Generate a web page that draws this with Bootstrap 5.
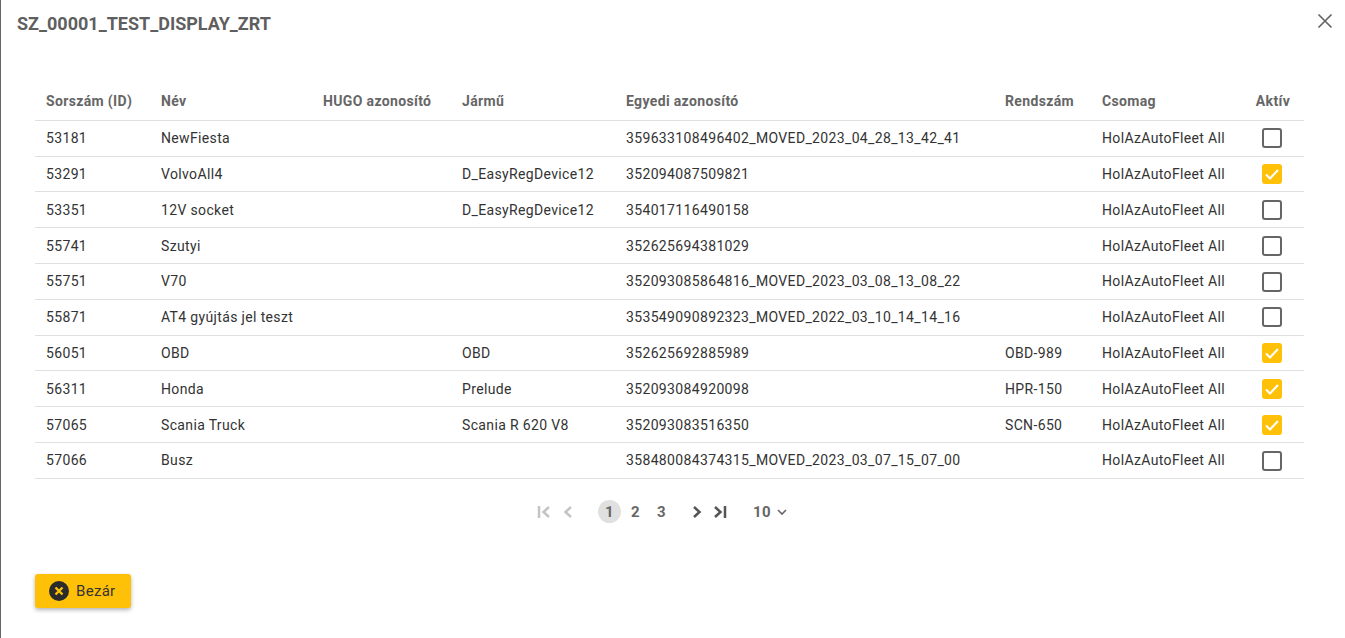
<!DOCTYPE html>
<html lang="hu">
<head>
<meta charset="utf-8">
<title>SZ_00001_TEST_DISPLAY_ZRT</title>
<link href="https://cdn.jsdelivr.net/npm/bootstrap@5.3.0/dist/css/bootstrap.min.css" rel="stylesheet">
<style>
html,body{height:100%;margin:0;overflow:hidden}
body{font-family:Roboto,"Liberation Sans",sans-serif;font-size:14px;color:#333;background:#fff}
.dlg{height:638px;border-left:1px solid #666;padding:0 41px 0 34px;position:relative}
.dlg-title{font-size:18px;font-weight:700;color:#5f5f5f;margin:0 0 0 -18px;padding-top:13px;line-height:21px;height:73px}
.dlg-close{position:absolute;top:13px;right:12px;width:16px;height:16px;background:none;border:0;padding:0;line-height:0}
.grid-tbl{table-layout:fixed;width:1269px;margin:0;border-collapse:collapse}
.grid-tbl th,.grid-tbl td{padding:1px 0 0 11px;border:0;border-bottom:1px solid #e0e0e0;vertical-align:middle;white-space:nowrap;font-size:14px;letter-spacing:.35px;box-shadow:none}
.grid-tbl th{height:47.3px;padding-top:10px;color:#666;font-weight:700}
.grid-tbl td{height:35.8px;color:#333}
.grid-tbl td.cell-c{padding:0 4px 1px 0;text-align:center}
.grid-tbl th.cell-c{padding:10px 2px 0 0;text-align:center}
.chk{display:inline-block;width:20px;height:20px;border:2px solid #666;border-radius:3px;vertical-align:middle;position:relative}
.chk.on{background:#ffc107;border-color:#ffc107}
.chk svg{display:block;position:absolute;left:-2px;top:-2px}
.pager{height:66px;color:#666;font-weight:700;font-size:15px;letter-spacing:.3px;margin-left:501px}
.pg-ico{display:inline-flex;width:16px;justify-content:center;line-height:0}
.pg-num{width:23px;height:23px;border-radius:50%;display:flex;align-items:center;justify-content:center}
.pg-num.cur{background:#e0e0e0}
.btn-close-dlg{background:#ffc107;border:0;border-radius:3px;height:34px;width:96px;display:flex;align-items:center;gap:7px;padding:0 0 0 14px;color:#333;font-size:15px;box-shadow:0 2px 4px rgba(0,0,0,.3);margin-top:29.700px;letter-spacing:.3px}
</style>
</head>
<body>
<div class="dlg">
  <h1 class="dlg-title">SZ_00001_TEST_DISPLAY_ZRT</h1>
  <button class="dlg-close" aria-label="Bezár">
    <svg width="16" height="16" viewBox="0 0 16 16" fill="none" stroke="#666" stroke-width="1.7"><path d="M1.5 1.5L14.500 14.500M14.500 1.500L1.500 14.500"/></svg>
  </button>
  <table class="table grid-tbl">
    <colgroup><col style="width:115px"><col style="width:162px"><col style="width:139px"><col style="width:164px"><col style="width:379px"><col style="width:97px"><col style="width:153px"><col style="width:60px"></colgroup>
    <thead><tr><th>Sorszám (ID)</th><th>Név</th><th>HUGO azonosító</th><th>Jármű</th><th>Egyedi azonosító</th><th>Rendszám</th><th>Csomag</th><th class="cell-c">Aktív</th></tr></thead>
    <tbody>
      <tr><td>53181</td><td>NewFiesta</td><td></td><td></td><td>359633108496402_MOVED_2023_04_28_13_42_41</td><td></td><td>HolAzAutoFleet All</td><td class="cell-c"><span class="chk"></span></td></tr>
      <tr><td>53291</td><td>VolvoAll4</td><td></td><td>D_EasyRegDevice12</td><td>352094087509821</td><td></td><td>HolAzAutoFleet All</td><td class="cell-c"><span class="chk on"><svg width="20" height="20" viewBox="0 0 20 20" fill="none" stroke="#fff" stroke-width="2"><path d="M4 10.500L8 14.500L16 6"/></svg></span></td></tr>
      <tr><td>53351</td><td>12V socket</td><td></td><td>D_EasyRegDevice12</td><td>354017116490158</td><td></td><td>HolAzAutoFleet All</td><td class="cell-c"><span class="chk"></span></td></tr>
      <tr><td>55741</td><td>Szutyi</td><td></td><td></td><td>352625694381029</td><td></td><td>HolAzAutoFleet All</td><td class="cell-c"><span class="chk"></span></td></tr>
      <tr><td>55751</td><td>V70</td><td></td><td></td><td>352093085864816_MOVED_2023_03_08_13_08_22</td><td></td><td>HolAzAutoFleet All</td><td class="cell-c"><span class="chk"></span></td></tr>
      <tr><td>55871</td><td>AT4 gyújtás jel teszt</td><td></td><td></td><td>353549090892323_MOVED_2022_03_10_14_14_16</td><td></td><td>HolAzAutoFleet All</td><td class="cell-c"><span class="chk"></span></td></tr>
      <tr><td>56051</td><td>OBD</td><td></td><td>OBD</td><td>352625692885989</td><td>OBD-989</td><td>HolAzAutoFleet All</td><td class="cell-c"><span class="chk on"><svg width="20" height="20" viewBox="0 0 20 20" fill="none" stroke="#fff" stroke-width="2"><path d="M4 10.500L8 14.500L16 6"/></svg></span></td></tr>
      <tr><td>56311</td><td>Honda</td><td></td><td>Prelude</td><td>352093084920098</td><td>HPR-150</td><td>HolAzAutoFleet All</td><td class="cell-c"><span class="chk on"><svg width="20" height="20" viewBox="0 0 20 20" fill="none" stroke="#fff" stroke-width="2"><path d="M4 10.500L8 14.500L16 6"/></svg></span></td></tr>
      <tr><td>57065</td><td>Scania Truck</td><td></td><td>Scania R 620 V8</td><td>352093083516350</td><td>SCN-650</td><td>HolAzAutoFleet All</td><td class="cell-c"><span class="chk on"><svg width="20" height="20" viewBox="0 0 20 20" fill="none" stroke="#fff" stroke-width="2"><path d="M4 10.500L8 14.500L16 6"/></svg></span></td></tr>
      <tr><td>57066</td><td>Busz</td><td></td><td></td><td>358480084374315_MOVED_2023_03_07_15_07_00</td><td></td><td>HolAzAutoFleet All</td><td class="cell-c"><span class="chk"></span></td></tr>
    </tbody>
  </table>
  <div class="pager d-flex align-items-center">
    <span class="pg-ico"><svg width="14" height="14" viewBox="0 0 14 14" fill="none" stroke="#c4c4c4" stroke-width="2.500"><path d="M2 1V13M12 2L6.500 7L12 12"/></svg></span>
    <span class="pg-ico ms-2"><svg width="10" height="14" viewBox="0 0 10 14" fill="none" stroke="#c4c4c4" stroke-width="2.500"><path d="M8 2L2.500 7L8 12"/></svg></span>
    <span class="pg-num cur" style="margin-left:22px">1</span>
    <span class="pg-num" style="margin-left:3px">2</span>
    <span class="pg-num" style="margin-left:3px">3</span>
    <span class="pg-ico" style="margin-left:16px"><svg width="10" height="14" viewBox="0 0 10 14" fill="none" stroke="#555" stroke-width="2.500"><path d="M2 2L7.500 7L2 12"/></svg></span>
    <span class="pg-ico" style="margin-left:7px"><svg width="14" height="14" viewBox="0 0 14 14" fill="none" stroke="#555" stroke-width="2.500"><path d="M2 2L7.500 7L2 12M12 1V13"/></svg></span>
    <span style="margin-left:25px">10</span>
    <svg width="10" height="8" viewBox="0 0 10 8" fill="none" stroke="#666" stroke-width="1.600" style="margin-left:6px"><path d="M1 2L5 6L9 2"/></svg>
  </div>
  <button class="btn-close-dlg">
    <svg width="20" height="20" viewBox="0 0 20 20"><circle cx="10" cy="10" r="10" fill="#2b2b2b"/><path d="M6.500 6.500L13.500 13.500M13.500 6.500L6.500 13.500" stroke="#ffc107" stroke-width="2.400"/></svg>
    <span>Bezár</span>
  </button>
</div>
</body>
</html>
